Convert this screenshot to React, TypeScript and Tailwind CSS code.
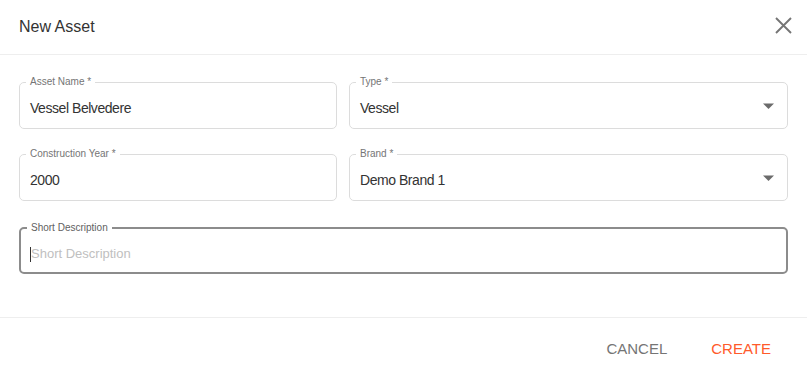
type FieldProps = {
  label: string;
  value?: string;
  select?: boolean;
};

function OutlinedField({ label, value, select }: FieldProps) {
  return (
    <fieldset className="h-[53px] rounded-[5px] border border-[#dcdcdc] px-[10px]">
      <legend className="ml-[-4px] px-[4px] text-[10px] leading-[12px] text-[#757575]">{label}</legend>
      <div className="mt-[11px] flex items-start justify-between">
        <span className="text-[14px] leading-[18px] tracking-[-0.45px] text-[#333333]">{value}</span>
        {select && (
          <svg className="mr-[3px] mt-[4px]" width="11" height="6" viewBox="0 0 11 6">
            <path d="M0 0.5h11L5.5 6z" fill="#6b6b6b" />
          </svg>
        )}
      </div>
    </fieldset>
  );
}

export default function App() {
  return (
    <div className="h-[379px] w-[807px] overflow-hidden bg-white font-['Liberation_Sans',Arial,sans-serif]">
      <div className="flex h-[55px] items-center justify-between border-b border-[#eeeeee] pl-[19px] pr-[15px]">
        <h1 className="text-[16px] leading-[24px] text-[#333333]">New Asset</h1>
        <button className="-mt-[4px]">
          <svg className="block" width="17" height="17" viewBox="0 0 17 17">
            <path d="M1 1l15 15M16 1L1 16" stroke="#757575" strokeWidth="1.9" />
          </svg>
        </button>
      </div>

      <div className="px-[19px] pt-[21px]">
        <div className="grid grid-cols-[318px_1fr] gap-x-[12px] gap-y-[19px]">
          <OutlinedField label="Asset Name *" value="Vessel Belvedere" />
          <OutlinedField label="Type *" value="Vessel" select />
          <OutlinedField label="Construction Year *" value="2000" />
          <OutlinedField label="Brand *" value="Demo Brand 1" select />
        </div>

        <fieldset className="mt-[20px] h-[53px] rounded-[5px] border-2 border-[#8c8c8c] px-[9px]">
          <legend className="ml-[-3px] px-[4px] text-[10px] leading-[13px] text-[#616161]">
            Short Description
          </legend>
          <div className="mt-[11px] flex items-center">
            <span className="h-[15px] w-px bg-[#333333]" />
            <span className="text-[13px] leading-[18px] text-[#c0c0c0]">Short Description</span>
          </div>
        </fieldset>
      </div>

      <div className="mt-[43px] flex h-[62px] items-center justify-end gap-[12px] border-t border-[#eeeeee] pr-[20px] pt-[2px]">
        <button className="px-[16px] py-[6px] text-[15px] text-[#757575]">CANCEL</button>
        <button className="px-[16px] py-[6px] text-[15px] text-[#ff5a2b]">CREATE</button>
      </div>
    </div>
  );
}
